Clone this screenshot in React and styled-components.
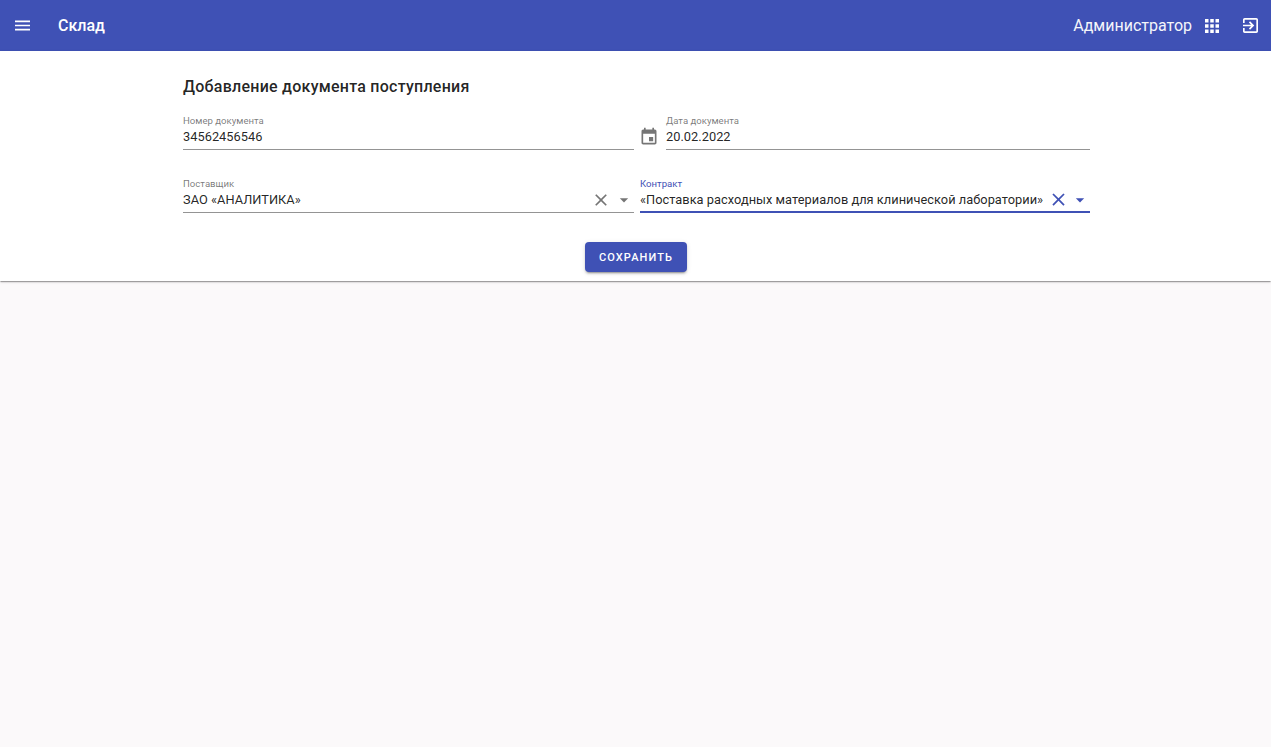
import React from "react";
import styled, { createGlobalStyle } from "styled-components";

const Global = createGlobalStyle`
  html, body { margin: 0; padding: 0; height: 100%; background: #fbf9fa; }
  body { font-family: Roboto, "Liberation Sans", sans-serif; color: rgba(0,0,0,.87); }
`;
const Page = styled.div`
  width: 100%;
  min-height: 747px;
  background: #fbf9fa;
`;
const AppBar = styled.header`
  height: 51px;
  background: #3f51b5;
  color: #fff;
  display: flex;
  align-items: center;
  padding: 0 13px 0 15px;
  box-sizing: border-box;
`;
const Title = styled.div`
  font-size: 16px;
  font-weight: 500;
  margin-left: 28px;
  flex: 1;
  line-height: 51px;
`;
const UserName = styled.div`
  font-size: 16px;
  font-weight: 400;
  margin-right: 13px;
  opacity: .95;
`;
const BarIcon = styled.svg`
  width: ${p => p.$size}px;
  height: ${p => p.$size}px;
  fill: #fff;
  display: block;
  flex: none;
  margin-left: ${p => p.$ml || 0}px;
`;
const Card = styled.main`
  background: #fff;
  height: 230px;
  box-sizing: border-box;
  padding: 26px 181px 0 183px;
  box-shadow: 0 2px 1px -1px rgba(0,0,0,.2), 0 1px 1px 0 rgba(0,0,0,.14), 0 1px 3px 0 rgba(0,0,0,.12);
`;
const Heading = styled.h1`
  margin: 0;
  font-size: 16px;
  line-height: 19px;
  font-weight: 500;
  letter-spacing: .25px;
  color: rgba(0,0,0,.87);
`;
const Row = styled.div`
  display: flex;
  align-items: flex-end;
  margin-top: ${p => p.$mt}px;
`;
const Field = styled.div`
  flex: ${p => p.$w ? `0 0 ${p.$w}px` : 1};
  min-width: 0;
  margin-left: ${p => p.$ml || 0}px;
  height: 36px;
  box-sizing: border-box;
  border-bottom: ${p => p.$focus ? "2px solid #3f51b5" : "1px solid rgba(0,0,0,.42)"};
  display: flex;
  flex-direction: column;
`;
const Label = styled.label`
  font-size: 9.6px;
  line-height: 11px;
  margin-top: 1px;
  color: ${p => p.$focus ? "#3f51b5" : "rgba(0,0,0,.54)"};
`;
const ValueLine = styled.div`
  display: flex;
  align-items: center;
  height: 19px;
  margin-top: 1px;
`;
const Value = styled.span`
  flex: 1;
  font-size: 12.8px;
  line-height: 19px;
  letter-spacing: .03px;
  white-space: nowrap;
  color: rgba(0,0,0,.87);
`;
const CalendarIcon = styled.svg`
  width: 20px;
  height: 20px;
  fill: rgba(0,0,0,.54);
  flex: none;
  margin: 0 7px 3px 5px;
`;
const ClearIcon = styled.svg`
  width: ${p => p.$focus ? 21 : 20}px;
  height: ${p => p.$focus ? 21 : 20}px;
  fill: ${p => p.$focus ? "#3f51b5" : "rgba(0,0,0,.54)"};
  flex: none;
  margin-right: ${p => p.$focus ? 1 : 3}px;
`;
const Arrow = styled.svg`
  width: 20px;
  height: 20px;
  fill: ${p => p.$focus ? "#3f51b5" : "rgba(0,0,0,.54)"};
  flex: none;
`;
const Actions = styled.div`
  display: flex;
  justify-content: center;
  margin-top: 29px;
  padding-right: 1px;
`;
const SaveButton = styled.button`
  width: 102px;
  height: 30px;
  border: 0;
  border-radius: 4px;
  background: #3f51b5;
  color: #fff;
  font-family: inherit;
  font-size: 11px;
  font-weight: 500;
  letter-spacing: 1.1px;
  text-transform: uppercase;
  box-shadow: 0 3px 1px -2px rgba(0,0,0,.2), 0 2px 2px 0 rgba(0,0,0,.14), 0 1px 5px 0 rgba(0,0,0,.12);
`;

const X = "M19 6.41 17.59 5 12 10.59 6.41 5 5 6.41 10.59 12 5 17.59 6.41 19 12 13.41 17.59 19 19 17.59 13.41 12z";

export default function App() {
  return (
    <Page>
      <Global />
      <AppBar>
        <BarIcon $size={15} viewBox="3 3 18 18"><path d="M3 18h18v-2H3v2zm0-5h18v-2H3v2zm0-7v2h18V6H3z" /></BarIcon>
        <Title>Склад</Title>
        <UserName>Администратор</UserName>
        <BarIcon $size={14} viewBox="4 4 16 16"><path d="M4 8h4V4H4v4zm6 12h4v-4h-4v4zm-6 0h4v-4H4v4zm0-6h4v-4H4v4zm6 0h4v-4h-4v4zm6-10v4h4V4h-4zm-6 4h4V4h-4v4zm6 6h4v-4h-4v4zm0 6h4v-4h-4v4z" /></BarIcon>
        <BarIcon $size={15} $ml={24} viewBox="3 3 18 18"><path d="M10.09 15.59 11.5 17l5-5-5-5-1.41 1.41L12.67 11H3v2h9.67l-2.58 2.59zM19 3H5c-1.11 0-2 .9-2 2v4h2V5h14v14H5v-4H3v4c0 1.1.89 2 2 2h14c1.1 0 2-.9 2-2V5c0-1.1-.9-2-2-2z" /></BarIcon>
      </AppBar>
      <Card>
        <Heading>Добавление документа поступления</Heading>
        <Row $mt={18}>
          <Field $w={451}>
            <Label>Номер документа</Label>
            <ValueLine><Value>34562456546</Value></ValueLine>
          </Field>
          <CalendarIcon viewBox="0 0 24 24"><path d="M17 12h-5v5h5v-5zM16 1v2H8V1H6v2H5c-1.11 0-1.99.9-1.99 2L3 19c0 1.1.89 2 2 2h14c1.1 0 2-.9 2-2V5c0-1.1-.9-2-2-2h-1V1h-2zm3 18H5V8h14v11z" /></CalendarIcon>
          <Field>
            <Label>Дата документа</Label>
            <ValueLine><Value>20.02.2022</Value></ValueLine>
          </Field>
        </Row>
        <Row $mt={27}>
          <Field $w={451}>
            <Label>Поставщик</Label>
            <ValueLine>
              <Value>ЗАО «АНАЛИТИКА»</Value>
              <ClearIcon viewBox="0 0 24 24"><path d={X} /></ClearIcon>
              <Arrow viewBox="0 0 24 24"><path d="m7 10 5 5 5-5z" /></Arrow>
            </ValueLine>
          </Field>
          <Field $ml={6} $focus>
            <Label $focus>Контракт</Label>
            <ValueLine>
              <Value>«Поставка расходных материалов для клинической лаборатории»</Value>
              <ClearIcon $focus viewBox="0 0 24 24"><path d={X} /></ClearIcon>
              <Arrow $focus viewBox="0 0 24 24"><path d="m7 10 5 5 5-5z" /></Arrow>
            </ValueLine>
          </Field>
        </Row>
        <Actions><SaveButton>Сохранить</SaveButton></Actions>
      </Card>
    </Page>
  );
}
